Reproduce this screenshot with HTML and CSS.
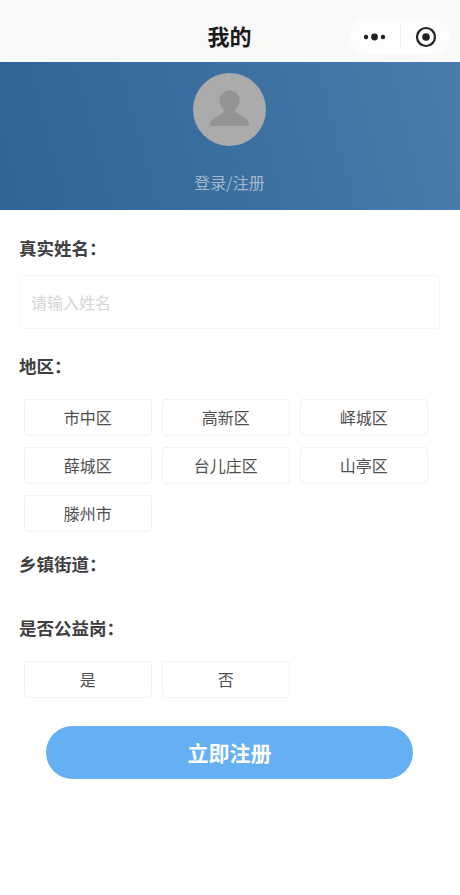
FILE: index.html
```html
<!DOCTYPE html>
<html lang="zh-CN">
<head>
<meta charset="utf-8">
<title>我的</title>
<link rel="stylesheet" href="styles.css">
</head>
<body>
<header class="nav">
  <h1 class="nav-title">我的</h1>
  <div class="capsule">
    <svg class="cap-more" viewBox="0 0 24 8" width="24" height="8"><circle cx="3" cy="4" r="2.2"/><circle cx="11.5" cy="4" r="3.4"/><circle cx="20" cy="4" r="2.2"/></svg>
    <span class="cap-line"></span>
    <svg class="cap-close" viewBox="0 0 22 22" width="22" height="22"><circle cx="11" cy="11" r="9" fill="none" stroke="#222" stroke-width="2.2"/><circle cx="11" cy="11" r="3.8" fill="#222"/></svg>
  </div>
</header>
<section class="banner">
  <div class="avatar">
    <svg viewBox="0 0 73 73" width="73" height="73"><path fill="#949494" d="M36.500 17.500c-5.600 0-10 4.400-10 10 0 3.600 1.700 6.800 4.300 8.600v1.400c0 1.200-.7 2.200-1.900 2.900-2.900 1.700-6.800 3.800-9.500 6-1.400 1.100-2.400 2.500-2.400 4.100v1.300c0 .8.500 1.300 1.300 1.300h36.400c.8 0 1.300-.5 1.300-1.300v-1.300c0-1.600-1-3-2.400-4.100-2.700-2.200-6.600-4.300-9.500-6-1.200-.7-1.900-1.700-1.900-2.900v-1.400c2.600-1.800 4.300-5 4.300-8.600 0-5.600-4.400-10-10-10z"/></svg>
  </div>
  <p class="login">登录/注册</p>
</section>
<main class="form">
  <h2 class="label label-name">真实姓名：</h2>
  <div class="input">请输入姓名</div>
  <h2 class="label label-area">地区：</h2>
  <div class="chips chips-area">
    <div class="chip">市中区</div>
    <div class="chip">高新区</div>
    <div class="chip">峄城区</div>
    <div class="chip">薛城区</div>
    <div class="chip">台儿庄区</div>
    <div class="chip">山亭区</div>
    <div class="chip">滕州市</div>
  </div>
  <h2 class="label label-town">乡镇街道：</h2>
  <h2 class="label label-post">是否公益岗：</h2>
  <div class="chips chips-post">
    <div class="chip">是</div>
    <div class="chip">否</div>
  </div>
  <button class="submit" type="button">立即注册</button>
</main>
</body>
</html>
```
FILE: styles.css
```css
* { box-sizing: border-box; }
html, body { margin: 0; padding: 0; }
body {
  width: 460px;
  height: 895px;
  overflow: hidden;
  background: #fff;
  font-family: "Noto Sans CJK SC", "Noto Sans", sans-serif;
  color: #444;
}
.nav {
  height: 62px;
  background: #f9f9f9;
  display: flex;
  align-items: center;
  justify-content: center;
  position: relative;
  padding: 8px 1px 0 0;
}
.nav-title {
  margin: 0;
  font-size: 22px;
  font-weight: 700;
  line-height: 26px;
  color: #1a1a1a;
}
.capsule {
  position: absolute;
  left: 349px;
  top: 19px;
  width: 101px;
  height: 35px;
  border-radius: 18px;
  background: #fdfdfd;
  display: flex;
  align-items: center;
}
.cap-more { margin-left: 14px; fill: #222; }
.cap-line { width: 1px; height: 24px; background: #eeeeee; margin-left: 13px; }
.cap-close { margin-left: 14px; }
.banner {
  height: 148px;
  background: linear-gradient(75deg, #2f6494 0%, #3a6fa0 50%, #4a7dac 100%);
  display: flex;
  flex-direction: column;
  align-items: center;
  padding: 11px 1px 0 0;
}
.avatar {
  width: 73px;
  height: 73px;
  border-radius: 50%;
  background: #ababab;
}
.avatar svg { display: block; }
.login {
  margin: 24px 0 0;
  font-size: 16px;
  line-height: 24px;
  color: #a3b8cb;
}
.form { padding: 0 19px; }
.label {
  margin: 0;
  font-size: 17.5px;
  font-weight: 700;
  line-height: 23px;
  color: #404040;
}
.label-name { padding-top: 26px; }
.input {
  margin-top: 16px;
  width: 421px;
  height: 54px;
  border: 1px solid #f5f5f5;
  border-radius: 3px;
  padding-left: 11px;
  font-size: 16px;
  line-height: 52px;
  color: #d4d4d4;
}
.label-area { margin-top: 25px; }
.chips {
  display: flex;
  flex-wrap: wrap;
  gap: 11px 10.5px;
  padding-left: 5px;
  width: 420px;
}
.chips-area { margin-top: 22px; }
.chip {
  width: 127.500px;
  height: 37px;
  border: 1px solid #f3f3f3;
  border-radius: 3px;
  text-align: center;
  font-size: 16px;
  line-height: 35px;
  color: #505050;
}
.label-town { margin-top: 20px; }
.label-post { margin-top: 41px; }
.chips-post { margin-top: 22px; }
.submit {
  display: block;
  margin: 28px 0 0 27px;
  width: 367px;
  height: 53px;
  border: 0;
  border-radius: 27px;
  padding: 0 0 2px;
  background: #64b0f2;
  color: #fff;
  font-family: inherit;
  font-size: 21px;
  font-weight: 700;
}
```
